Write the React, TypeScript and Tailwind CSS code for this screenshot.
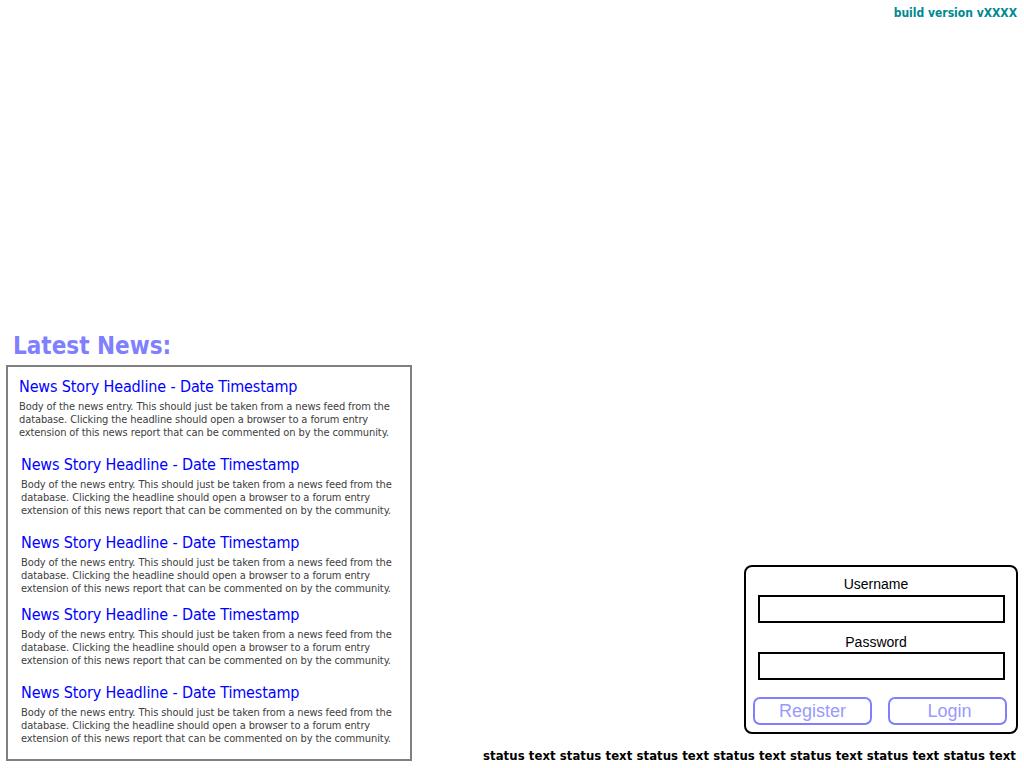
import React from "react";

const news = [
    { pt: "pt-[10px]", pl: "pl-[11px]" },
    { pt: "pt-[16px]", pl: "pl-[13px]" },
    { pt: "pt-[16px]", pl: "pl-[13px]" },
    { pt: "pt-[10px]", pl: "pl-[13px]" },
    { pt: "pt-[16px]", pl: "pl-[13px]" },
];

const body =
    "Body of the news entry. This should just be taken from a news feed from the database. Clicking the headline should open a browser to a forum entry extension of this news report that can be commented on by the community.";

function NewsItem({ pt, pl }: { pt: string; pl: string }) {
    return (
        <div className={`${pt} ${pl} pr-[10px]`}>
            <a className="block text-[16px] leading-[20px] tracking-[-0.14px] text-[#0000ff] cursor-pointer">
                News Story Headline - Date Timestamp
            </a>
            <p className="mt-[3px] text-[11px] leading-[13px] tracking-[-0.1px] text-[#404040]">{body}</p>
        </div>
    );
}

export default function App() {
    return (
        <div className="w-[1024px] h-[768px] flex flex-col bg-white font-['DejaVu_Sans_Condensed','DejaVu_Sans',sans-serif]">
            {/* build version */}
            <div className="pt-[5px] pr-[7px] text-right text-[12px] leading-[16px] font-bold text-[#008891]">
                build version vXXXX
            </div>

            <div className="mt-auto flex items-end">
                {/* Latest News */}
                <div className="pl-[6px] pb-[7px]">
                    <h2 className="pl-[7px] pt-[1px] text-[24px] leading-[29px] font-bold text-[#8080ff]">
                        Latest News:
                    </h2>
                    <div className="mt-[4px] w-[406px] h-[396px] border-2 border-[#808080]">
                        {news.map((n, i) => (
                            <NewsItem key={i} pt={n.pt} pl={n.pl} />
                        ))}
                    </div>
                </div>

                {/* Login + status */}
                <div className="flex-1 flex flex-col items-end">
                    <div className="mr-[6px] w-[274px] h-[169px] border-2 border-black rounded-[8px] pt-[9px] pb-[7px] font-['Liberation_Sans',Arial,sans-serif]">
                        <div className="pr-[10px] text-center text-[14px] leading-[16px] text-black">Username</div>
                        <input className="mt-[3px] ml-[12px] block w-[247px] h-[28px] border-2 border-black outline-none" />
                        <div className="mt-[11px] pr-[10px] text-center text-[14px] leading-[16px] text-black">Password</div>
                        <input
                            type="password"
                            className="mt-[2px] ml-[12px] block w-[247px] h-[28px] border-2 border-black outline-none"
                        />
                        <div className="mt-[17px] pl-[7px] flex gap-[16px]">
                            <button className="w-[119px] h-[28px] border-2 border-[#8080ff] rounded-[7px] text-[18px] leading-[22px] text-[#9999ff]">
                                Register
                            </button>
                            <button className="w-[119px] h-[28px] pl-[4px] border-2 border-[#8080ff] rounded-[7px] text-[18px] leading-[22px] text-[#9999ff]">
                                Login
                            </button>
                        </div>
                    </div>
                    <div className="mt-[14px] pr-[8px] pb-[4px] text-[13px] leading-[16px] tracking-[0.05px] font-bold text-black whitespace-nowrap">
                        status text status text status text status text status text status text status text
                    </div>
                </div>
            </div>
        </div>
    );
}
